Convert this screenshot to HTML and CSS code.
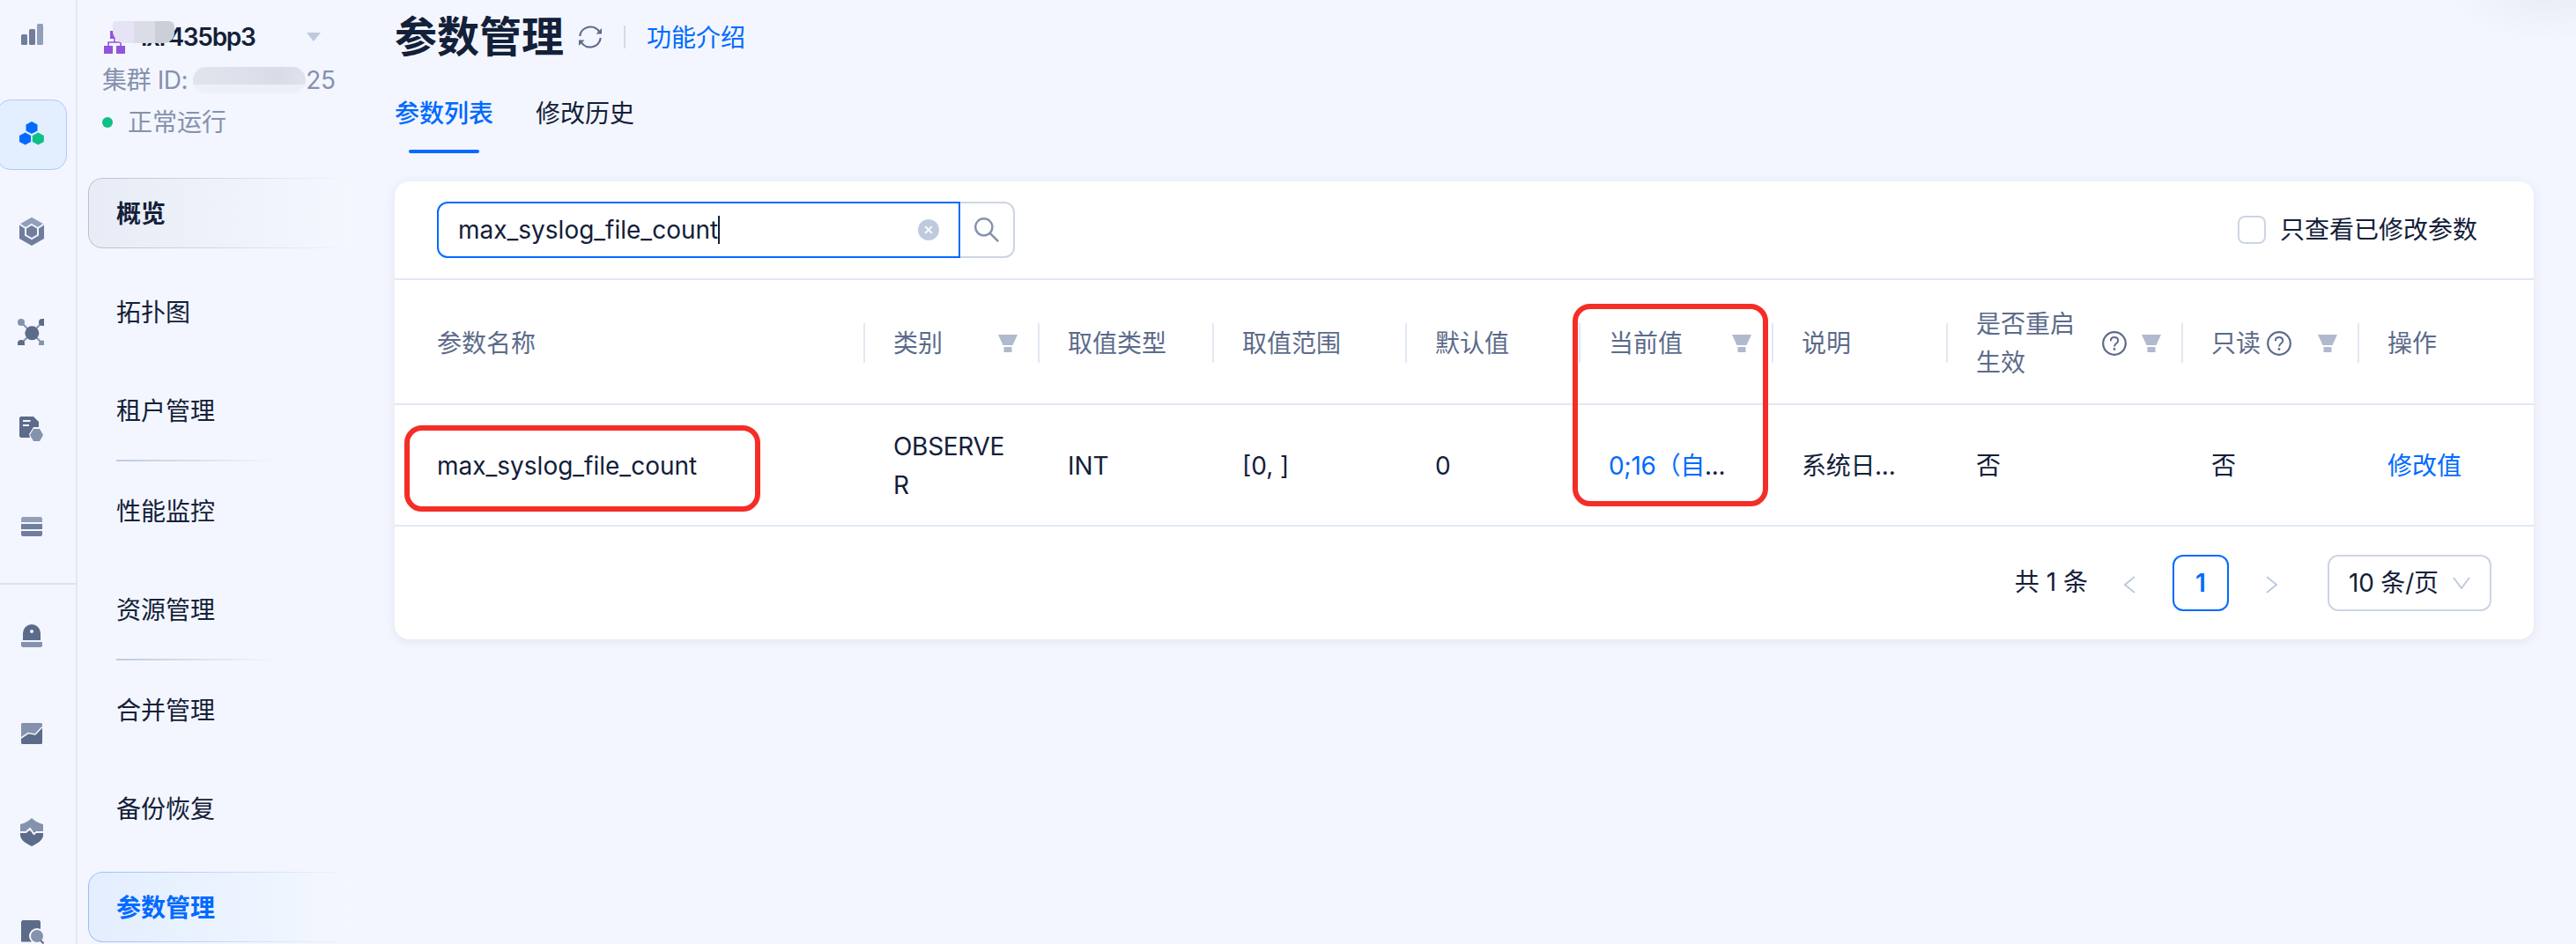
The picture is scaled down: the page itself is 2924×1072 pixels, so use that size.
FILE: index.html
```html
<!DOCTYPE html>
<html lang="zh-CN">
<head>
  <meta charset="UTF-8" />
  <meta name="viewport" content="width=device-width, initial-scale=1.0" />
  <title>参数管理</title>
  <link rel="stylesheet" href="styles.css">
</head>
<body>
  <svg width="0" height="0" class="sprite">
    <symbol id="filter" viewBox="0 0 22 20"><path d="M0 0h22l-5.500 12h-11zM6.500 14h9v6h-9z" fill="#b0b9cd"/></symbol>
    <symbol id="help" viewBox="0 0 28 28"><circle cx="14" cy="14" r="12.800" fill="none" stroke="#5c6b8a" stroke-width="2.200"/><path d="M9.800 11.200c0-2.500 1.800-4.200 4.200-4.200s4.200 1.600 4.200 3.900c0 3.100-4.200 3.300-4.200 6.600" fill="none" stroke="#5c6b8a" stroke-width="2"/><circle cx="14" cy="20.500" r="1.400" fill="#5c6b8a"/></symbol>
  </svg>

  <div class="layout">
    <nav class="rail">
      <a class="rail-item"><svg viewBox="0 0 40 40"><g fill="#6f7e9c"><rect x="8" y="18" width="7" height="12" rx="1.500"/><rect x="17" y="12" width="7" height="18" rx="1.500"/></g><rect x="26" y="6" width="7" height="24" rx="1.500" fill="#929fba"/></svg></a>
      <a class="rail-item active"><svg viewBox="0 0 40 40"><path d="M20 5l6.500 3.500v7L20 19l-6.500-3.500v-7zM12.600 17.500l6.500 3.500v7l-6.500 3.500L6 28v-7z" fill="#006aff"/><path d="M27.300 17.500l6.500 3.500v7l-6.500 3.500-6.500-3.500v-7z" fill="#0fc085"/></svg></a>
      <a class="rail-item"><svg viewBox="0 0 40 40"><path d="M20 2l14 8v16l-14 8-14-8V10z" fill="#6f7e9c"/><path d="M20 2l13.300 7.600-6.500 3.600L20 9.500l-6.800 3.700-6.500-3.600z" fill="#929fba"/><path d="M20 10l7 4v8l-7 4-7-4v-8zM6 9.500l7 4.500M34 9.500L27 14" fill="none" stroke="#f3f6fe" stroke-width="2"/></svg></a>
      <a class="rail-item"><svg viewBox="0 0 40 40"><path d="M8 9l24 24M32 9L8 33" stroke="#8592ad" stroke-width="1.800"/><circle cx="20.300" cy="21.300" r="8" fill="#5c6b8a"/><circle cx="8" cy="9" r="4" fill="#8592ad"/><path d="M34 5v8h-2a4 4 0 0 1 0-8zM4 35v-2a4 4 0 0 1 8 0v2z" fill="#5c6b8a"/><path d="M34 30v5h-6v-2a4 4 0 0 1 6-3z" fill="#8592ad"/></svg></a>
      <a class="rail-item"><svg viewBox="0 0 40 40"><path d="M7.500 4H22l6 6v6h-6l-5 8 1 4H7.500L6 26.500v-21z" fill="#5c6b8a"/><path d="M10 9h8.500M10 14h7" stroke="#f3f6fe" stroke-width="2"/><path d="M22 18h7l4 7-4 7h-7l-4-7z" fill="#8592ad"/></svg></a>
      <a class="rail-item"><svg viewBox="0 0 40 40"><path d="M9.500 6h21L32 7.500V12H8V7.500z" fill="#929fba"/><path d="M8 14h24v6H8zM8 22h24v4.500L30.500 28h-21L8 26.500z" fill="#6f7e9c"/></svg></a>
      <div class="rail-line"></div>
      <a class="rail-item"><svg viewBox="0 0 40 40"><path d="M10 24v-8a10 10 0 0 1 20 0v8z" fill="#5c6b8a"/><circle cx="20" cy="14" r="2" fill="#f3f6fe"/><path d="M8 26h24v4.500L30.500 32h-21L8 30.500z" fill="#8592ad"/></svg></a>
      <a class="rail-item"><svg viewBox="0 0 40 40"><rect x="8" y="6" width="24" height="24" rx="1.500" fill="#8592ad"/><path d="M8 23l8-5.500 8 1.500 8-9v18.500L30.500 30h-21L8 28.500z" fill="#5c6b8a"/><path d="M8 23l8-5.500 8 1.500 8-8.500" fill="none" stroke="#f3f6fe" stroke-width="1.600"/></svg></a>
      <a class="rail-item"><svg viewBox="0 0 40 40"><path d="M20 2c4 3.500 8 6 13 7v8H7V9c5-1 9-3.500 13-7z" fill="#8592ad"/><path d="M7 17h26v4c0 6-6 9.500-13 13C13 30.500 7 27 7 21z" fill="#5c6b8a"/><path d="M7 18h6.500l4.500-4 4.500 6 2.500-2h8" fill="none" stroke="#f3f6fe" stroke-width="2"/></svg></a>
      <a class="rail-item"><svg viewBox="0 0 40 40"><path d="M9.500 6h19L30 7.500v23H8v-23z" fill="#5c6b8a"/><circle cx="26" cy="24" r="8" fill="#8592ad" stroke="#f3f6fe" stroke-width="2"/><path d="M30 29l3.500 3.500" stroke="#5c6b8a" stroke-width="2"/></svg></a>
    </nav>

    <aside class="sidebar">
      <div class="cluster">
        <div class="cluster-name">
          <svg class="cluster-icon" viewBox="0 0 24 30"><path d="M0 21h10v9H0zM14 21h10v9H14zM7 4h10v9H7z" fill="#9254de"/><path d="M5 21v-4h14v4M12 12v5" fill="none" stroke="#9254de" stroke-width="1.600"/></svg>
          <span class="name-text">lxr435bp3</span>
          <span class="mosaic mosaic-name"></span>
          <span class="caret"></span>
        </div>
        <div class="cluster-id"><span>集群 ID:</span><span class="mosaic mosaic-id"></span><span class="id-tail">25</span></div>
        <div class="cluster-status"><span class="dot"></span>正常运行</div>
      </div>
      <ul class="menu">
        <li class="menu-item hover">概览</li>
        <li class="menu-item">拓扑图</li>
        <li class="menu-item">租户管理</li>
        <li class="menu-line"></li>
        <li class="menu-item">性能监控</li>
        <li class="menu-item">资源管理</li>
        <li class="menu-line"></li>
        <li class="menu-item">合并管理</li>
        <li class="menu-item">备份恢复</li>
        <li class="menu-item selected">参数管理</li>
      </ul>
    </aside>

    <main class="content">
      <header class="page-header">
        <h1>参数管理</h1>
        <svg class="refresh" viewBox="0 0 28 28"><path d="M2.200 13A12 12 0 0 1 24.500 8.500M25.800 15A12 12 0 0 1 3.500 19.500" fill="none" stroke="#5c6b8a" stroke-width="2.200"/><path d="M27 4v6.500h-6.500zM1 24v-6.500h6.500z" fill="#5c6b8a"/></svg>
        <span class="header-line"></span>
        <a class="link intro">功能介绍</a>
      </header>
      <div class="tabs">
        <div class="tab active">参数列表</div>
        <div class="tab">修改历史</div>
      </div>

      <section class="card">
        <div class="toolbar">
          <div class="search">
            <div class="search-input">
              <span>max_syslog_file_count</span><i class="text-cursor"></i>
              <svg class="clear" viewBox="0 0 24 24"><circle cx="12" cy="12" r="12" fill="#c0cade"/><path d="M8.200 8.200l7.600 7.600M15.800 8.200l-7.600 7.600" stroke="#fff" stroke-width="1.800"/></svg>
            </div>
            <div class="search-button"><svg viewBox="0 0 28 28"><circle cx="10.800" cy="10.800" r="9.600" fill="none" stroke="#8592ad" stroke-width="2.400"/><path d="M17.800 17.800l9.400 9.400" stroke="#8592ad" stroke-width="2.600"/></svg></div>
          </div>
          <label class="check"><span class="box"></span>只查看已修改参数</label>
        </div>

        <table class="params">
          <colgroup><col class="c1"><col class="c2"><col class="c3"><col class="c4"><col class="c5"><col class="c6"><col class="c7"><col class="c8"><col class="c9"><col class="c10"></colgroup>
          <thead>
            <tr>
              <th>参数名称</th>
              <th><div class="th"><span>类别</span><svg class="filter"><use href="#filter"/></svg></div></th>
              <th>取值类型</th>
              <th>取值范围</th>
              <th>默认值</th>
              <th><div class="th"><span>当前值</span><svg class="filter"><use href="#filter"/></svg></div></th>
              <th>说明</th>
              <th><div class="th"><span class="wrap">是否重启生效</span><svg class="help"><use href="#help"/></svg><svg class="filter"><use href="#filter"/></svg></div></th>
              <th><div class="th"><span>只读</span><svg class="help near"><use href="#help"/></svg><svg class="filter"><use href="#filter"/></svg></div></th>
              <th>操作</th>
            </tr>
          </thead>
          <tbody>
            <tr>
              <td>max_syslog_file_count<div class="mark mark-name"></div></td>
              <td class="tight">OBSERVE<br>R</td>
              <td>INT</td>
              <td>[0, ]</td>
              <td>0</td>
              <td class="tight"><span class="link">0;16（自</span>...<div class="mark mark-value"></div></td>
              <td class="tight">系统日...</td>
              <td>否</td>
              <td>否</td>
              <td><a class="link">修改值</a></td>
            </tr>
          </tbody>
        </table>

        <div class="pagination">
          <span class="total">共 1 条</span>
          <svg class="arrow prev" viewBox="0 0 14 20"><path d="M13 1L2 10l11 9" fill="none" stroke="#c0cade" stroke-width="2"/></svg>
          <span class="page">1</span>
          <svg class="arrow next" viewBox="0 0 14 20"><path d="M1 1l11 9-11 9" fill="none" stroke="#c0cade" stroke-width="2"/></svg>
          <span class="page-size">10 条/页<svg viewBox="0 0 20 14"><path d="M1 1l9 12 9-12" fill="none" stroke="#c0cade" stroke-width="2"/></svg></span>
        </div>
      </section>
    </main>
  </div>
</body>
</html>
```
FILE: styles.css
```css
*, *::before, *::after { box-sizing: border-box; }
body { margin: 0; height: 1072px; overflow: hidden; background: radial-gradient(ellipse 110px 50px at 2890px -4px, #e9edf5, rgba(243,246,254,0)) #f3f6fe; color: #132039; font-family: Inter, "Noto Sans CJK SC", sans-serif; font-size: 28px; line-height: 44px; }
svg { display: block; flex: none; }
.sprite { position: absolute; }
.link { color: #006aff; }

.layout { display: flex; height: 1072px; overflow: hidden; }

/* Icon rail */
.rail { width: 88px; height: 1100px; flex: none; border-right: 2px solid #e2e8f3; padding-top: 1px; display: flex; flex-direction: column; gap: 32px; }
.rail-item { width: 80px; height: 80px; margin-left: -4px; flex: none; display: flex; align-items: center; justify-content: center; border-radius: 16px; border: 1px solid transparent; }
.rail-item.active { background: #e3eefe; border-color: #b0caff; }
.rail-item svg { width: 40px; height: 40px; }
.rail-line { height: 2px; flex: none; background: #dbe2f2; margin: -11px 0 -13px; }

/* Sidebar */
.sidebar { width: 360px; height: 1100px; flex: none; }
.cluster { height: 202px; padding: 20px 0 0 28px; }
.cluster-name { height: 44px; padding-left: 2px; display: flex; align-items: center; position: relative; font-weight: 600; }
.cluster-icon { width: 24px; height: 30px; margin-top: 8px; }
.name-text { margin-left: 18px; width: 130px; letter-spacing: -1.300px; }
.caret { margin-left: 58px; border: 8px solid transparent; border-top: 10px solid #bfcadf; border-bottom: 0; }
.mosaic { border-radius: 15px; }
.mosaic-name { position: absolute; left: 12px; top: 4px; width: 70px; height: 25px; border-radius: 4px 6px 12px 14px; background: linear-gradient(90deg, #e5e3f5 24px, #dadde5 24px 48px, #cbcfd8 48px); }
.mosaic-id { width: 128px; height: 30px; margin-left: 6px; background: linear-gradient(90deg, #e1e4ed, #dce0ea 50%, #d8dce6 75%, #dfe3ed) 0 0 / 100% 20px no-repeat #edf0f8; }
.cluster-id { margin-top: 5px; height: 44px; display: flex; align-items: center; color: #8592ad; letter-spacing: -0.400px; }
.cluster-status { margin-top: 4px; height: 44px; display: flex; align-items: center; color: #8592ad; }
.dot { width: 12px; height: 12px; border-radius: 50%; background: #0fc085; margin: 0 17px 0 0; }
.menu { list-style: none; margin: 0; padding: 0 0 0 12px; display: flex; flex-direction: column; gap: 32px; }
.menu-item { width: 300px; height: 80px; padding-left: 32px; line-height: 82px; position: relative; border-radius: 16px 0 0 16px; }
.menu-item::before { content: ''; position: absolute; inset: 0; border: 1px solid transparent; border-right: 0; border-radius: 16px 0 0 16px; -webkit-mask: linear-gradient(90deg, #000, transparent); mask: linear-gradient(90deg, #000, transparent); }
.menu-item.hover { font-weight: 700; background: linear-gradient(90deg, #e8ecf6, #f4f7fe); }
.menu-item.hover::before { border-color: #b9c0cf; }
.menu-item.selected { font-weight: 700; color: #006aff; background: linear-gradient(90deg, #e3eefe, #f3f7ff); }
.menu-item.selected::before { border-color: #9dbcfa; }
.menu-line { width: 180px; height: 2px; margin: -16px 0 -16px 32px; background: linear-gradient(90deg, #becae0, transparent); }

/* Page header */
.content { width: 2428px; flex: none; }
.page-header { height: 84px; display: flex; align-items: center; }
.page-header h1 { margin: 0; font-size: 48px; line-height: 72px; font-weight: 700; }
.refresh { width: 28px; height: 28px; margin-left: 16px; }
.header-line { width: 2px; height: 26px; background: #d3dbe9; margin: 0 24px 0 24px; }
.intro { padding-top: 2px; }
.tabs { display: flex; gap: 48px; height: 122px; }
.tab { height: 90px; line-height: 90px; position: relative; }
.tab.active { color: #006aff; font-weight: 500; }
.tab.active::after { content: ''; position: absolute; left: 16px; right: 16px; bottom: 0; height: 4px; border-radius: 2px; background: #006aff; }

/* Card */
.card { height: 520px; background: #fff; border-radius: 16px; box-shadow: 0 2px 12px rgba(30,50,90,0.09); }
.toolbar { height: 112px; padding: 0 64px 0 48px; display: flex; align-items: center; justify-content: space-between; border-bottom: 2px solid #e2e8f3; }
.search { display: flex; height: 64px; }
.search-input { width: 594px; border: 2px solid #006aff; border-radius: 12px 0 0 12px; padding: 0 22px; display: flex; align-items: center; }
.text-cursor { width: 2px; height: 32px; background: #132039; }
.clear { width: 24px; height: 24px; margin-left: auto; }
.search-button { width: 62px; border: 2px solid #cdd5e4; border-left: 0; border-radius: 0 12px 12px 0; display: flex; align-items: center; justify-content: center; }
.search-button svg { width: 28px; height: 28px; }
.check { display: flex; align-items: center; }
.box { width: 32px; height: 32px; border: 2px solid #cdd5e4; border-radius: 8px; margin-right: 16px; }

/* Params table */
.params { width: 2428px; table-layout: fixed; border-collapse: separate; border-spacing: 0; }
.params th, .params td { position: relative; padding: 0 0 0 32px; border-bottom: 2px solid #e2e8f3; text-align: left; vertical-align: middle; font-weight: 400; white-space: nowrap; }
.params th { height: 142px; padding-top: 4px; color: #5c6b8a; }
.params td { height: 138px; padding-top: 1px; }
.params th:first-child, .params td:first-child { padding-left: 48px; }
.params th:not(:last-child)::after { content: ''; position: absolute; right: 0; top: 49px; width: 2px; height: 45px; background: #e2e8f3; }
.params .tight { letter-spacing: -0.300px; }
.c1 { width: 534px; }
.c2, .c3, .c7 { width: 198px; }
.c4, .c6 { width: 219px; }
.c5 { width: 197px; }
.c8 { width: 267px; }
.c9 { width: 200px; }
.c10 { width: 198px; }
.th { display: flex; align-items: center; padding-right: 25px; }
.filter { width: 22px; height: 20px; margin-left: auto; }
.help { width: 28px; height: 28px; margin-left: 31px; }
.help.near { margin-left: 7px; }
.wrap { width: 112px; white-space: normal; }
.mark { position: absolute; border: 6px solid #f52d27; border-radius: 20px; pointer-events: none; z-index: 1; }
.mark-name { left: 11px; top: 23px; width: 404px; height: 98px; }
.mark-value { left: -9px; top: -115px; width: 222px; height: 230px; }

/* Pagination */
.pagination { height: 128px; padding: 0 48px 0 0; display: flex; align-items: center; justify-content: flex-end; }
.total { margin-bottom: 3px; }
.arrow { width: 14px; height: 20px; margin: 4px 42px 0 40px; }
.page { width: 64px; height: 64px; border: 2px solid #006aff; border-radius: 12px; text-align: center; line-height: 60px; color: #006aff; font-weight: 600; }
.arrow.next { margin-left: 42px; margin-right: 56px; }
.page-size { width: 186px; height: 64px; border: 2px solid #cdd5e4; border-radius: 12px; padding: 0 22px; display: flex; align-items: center; justify-content: space-between; letter-spacing: -0.200px; }
.page-size svg { width: 20px; height: 14px; }
```
